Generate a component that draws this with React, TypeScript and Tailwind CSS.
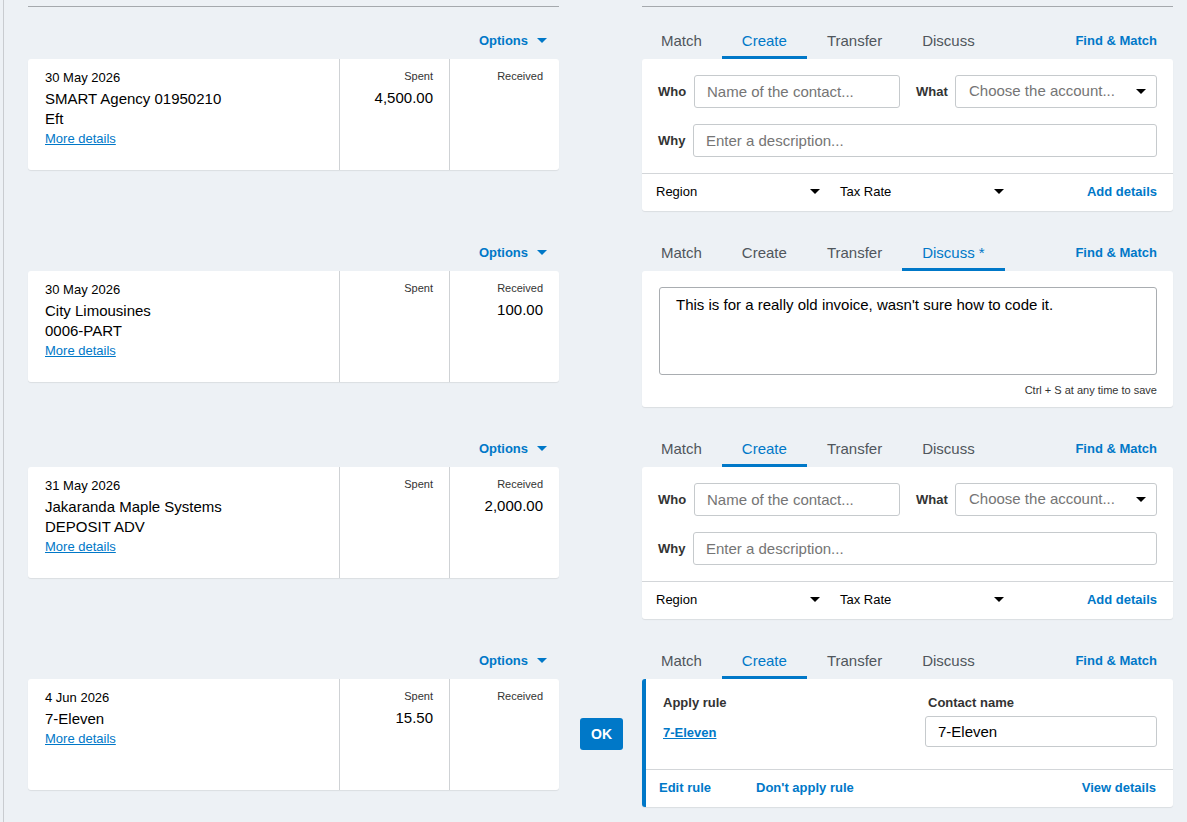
import React from "react";

type Txn = {
  date: string;
  name: string;
  ref?: string;
  spent?: string;
  received?: string;
};

const Caret = ({ className = "" }: { className?: string }) => (
  <svg width="10" height="5" viewBox="0 0 10 5" className={className}>
    <path d="M0 0h10L5 5z" fill="currentColor" />
  </svg>
);

function TxnCard({ t }: { t: Txn }) {
  return (
    <div className="flex h-[111px] w-[531px] rounded-[3px] bg-white shadow-[0_1px_1px_rgba(0,0,0,0.08)]">
      <div className="flex-1 pl-[17px] pt-[9px]">
        <div className="text-[13px] leading-[20px] text-black">{t.date}</div>
        <div className="text-[15px] leading-[21px] text-black">{t.name}</div>
        {t.ref && <div className="text-[15px] leading-[20px] text-black">{t.ref}</div>}
        <a className="block text-[13px] leading-[19px] text-[#0078c8] underline">More details</a>
      </div>
      <div className="w-[110px] border-l border-[#cfd2d5] pr-[16px] pt-[9px] text-right">
        <div className="text-[11px] leading-[16px] text-[#333]">Spent</div>
        {t.spent && <div className="mt-[4px] text-[15px] leading-[20px] text-black">{t.spent}</div>}
      </div>
      <div className="w-[110px] border-l border-[#cfd2d5] pr-[16px] pt-[9px] text-right">
        <div className="text-[11px] leading-[16px] text-[#333]">Received</div>
        {t.received && (
          <div className="mt-[4px] text-[15px] leading-[20px] text-black">{t.received}</div>
        )}
      </div>
    </div>
  );
}

function Tabs({ active }: { active: string }) {
  const tabs = ["Match", "Create", "Transfer", active === "Discuss *" ? "Discuss *" : "Discuss"];
  return (
    <div className="-ml-[1px] flex h-[31px] w-[532px]">
      {tabs.map((tab) => (
        <div
          key={tab}
          className={
            "flex items-center border-b-[3px] px-[20px] pb-[2px] text-[15px] " +
            (tab === active ? "border-[#0078c8] text-[#0078c8]" : "border-transparent text-[#50565c]")
          }
        >
          {tab}
        </div>
      ))}
      <div className="ml-auto flex items-center pb-[6px] pr-[16px] text-[13px] font-bold text-[#0078c8]">
        Find &amp; Match
      </div>
    </div>
  );
}

function CreatePanel() {
  return (
    <div className="w-[531px] rounded-[3px] bg-white shadow-[0_1px_1px_rgba(0,0,0,0.08)]">
      <div className="px-[16px] pt-[16px]">
        <div className="flex h-[33px] items-center">
          <div className="w-[36px] text-[13px] font-bold text-[#333]">Who</div>
          <input
            className="h-[33px] w-[206px] rounded-[3px] border border-[#c6cacd] px-[12px] text-[15px] outline-none placeholder:text-[#757575]"
            placeholder="Name of the contact..."
          />
          <div className="ml-[16px] w-[39px] text-[13px] font-bold text-[#333]">What</div>
          <div className="flex h-[33px] flex-1 items-center justify-between rounded-[3px] border border-[#c6cacd] pl-[13px] pr-[10px] text-[15px] text-[#757575]">
            <span>Choose the account...</span>
            <Caret className="text-black" />
          </div>
        </div>
        <div className="mt-[16px] flex h-[33px] items-center">
          <div className="w-[35px] text-[13px] font-bold text-[#333]">Why</div>
          <input
            className="h-[33px] flex-1 rounded-[3px] border border-[#c6cacd] px-[12px] text-[15px] outline-none placeholder:text-[#757575]"
            placeholder="Enter a description..."
          />
        </div>
      </div>
      <div className="mt-[16px] flex h-[38px] items-center border-t border-[#d3d6d9] pb-[2px] pl-[14px] pr-[16px] text-[13px] text-black">
        <div className="flex w-[168px] items-center justify-between pr-[4px]">
          <span>Region</span>
          <Caret />
        </div>
        <div className="ml-[16px] flex w-[168px] items-center justify-between pr-[4px]">
          <span>Tax Rate</span>
          <Caret />
        </div>
        <div className="ml-auto font-bold text-[#0078c8]">Add details</div>
      </div>
    </div>
  );
}

function DiscussPanel() {
  return (
    <div className="w-[531px] rounded-[3px] bg-white px-[16px] pb-[10px] pt-[16px] shadow-[0_1px_1px_rgba(0,0,0,0.08)]">
      <div className="ml-[1px] h-[88px] rounded-[3px] border border-[#a9adb1] px-[16px] pt-[7px] text-[15px] leading-[20px] text-black">
        This is for a really old invoice, wasn't sure how to code it.
      </div>
      <div className="mt-[9px] text-right text-[11px] leading-[13px] text-[#333]">
        Ctrl + S at any time to save
      </div>
    </div>
  );
}

function RulePanel() {
  return (
    <div className="w-[531px] rounded-[3px] border-l-4 border-[#0078c8] bg-white shadow-[0_1px_1px_rgba(0,0,0,0.08)]">
      <div className="flex h-[90px] pl-[17px] pr-[16px] pt-[16px]">
        <div className="flex-1">
          <div className="text-[13px] font-bold leading-[16px] text-[#333]">Apply rule</div>
          <a className="mt-[14px] block text-[13px] font-bold leading-[16px] text-[#0078c8] underline">
            7-Eleven
          </a>
        </div>
        <div className="w-[232px]">
          <div className="pl-[3px] text-[13px] font-bold leading-[16px] text-[#333]">Contact name</div>
          <input
            className="mt-[5px] h-[31px] w-full rounded-[3px] border border-[#c6cacd] px-[12px] text-[15px] text-black outline-none"
            defaultValue="7-Eleven"
          />
        </div>
      </div>
      <div className="flex h-[38px] items-center border-t border-[#d3d6d9] pb-[2px] pl-[13px] pr-[17px] text-[13px] font-bold text-[#0078c8]">
        <span>Edit rule</span>
        <span className="ml-[45px]">Don't apply rule</span>
        <span className="ml-auto">View details</span>
      </div>
    </div>
  );
}

function Row({
  t,
  panel,
  tab,
  ok,
}: {
  t: Txn;
  panel: React.ReactNode;
  tab: string;
  ok?: boolean;
}) {
  return (
    <div className="mb-[29px]">
      <div className="flex">
        <div className="flex h-[31px] w-[531px] items-center justify-end pb-[6px] pr-[12px] text-[13px] font-bold text-[#0078c8]">
          <span>Options</span>
          <Caret className="ml-[9px]" />
        </div>
        <div className="w-[83px]" />
        <Tabs active={tab} />
      </div>
      <div className="flex items-start">
        <TxnCard t={t} />
        <div className="flex w-[83px] justify-center pl-[2px] pt-[39px]">
          {ok && (
            <button className="h-[32px] w-[43px] rounded-[3px] bg-[#0078c8] text-[14px] font-bold text-white">
              OK
            </button>
          )}
        </div>
        {panel}
      </div>
    </div>
  );
}

export default function App() {
  return (
    <div className="min-h-screen bg-[#edf1f5] font-['Liberation_Sans',Arial,sans-serif]">
      <div className="ml-[3px] min-h-[822px] border-l border-[#c9ccd0] pl-[24px] pt-[6px]">
        <div className="mb-[21px] flex">
          <div className="w-[531px] border-t border-[#a5a9ad]" />
          <div className="w-[83px]" />
          <div className="w-[531px] border-t border-[#a5a9ad]" />
        </div>
        <Row
          t={{ date: "30 May 2026", name: "SMART Agency 01950210", ref: "Eft", spent: "4,500.00" }}
          tab="Create"
          panel={<CreatePanel />}
        />
        <Row
          t={{ date: "30 May 2026", name: "City Limousines", ref: "0006-PART", received: "100.00" }}
          tab="Discuss *"
          panel={<DiscussPanel />}
        />
        <Row
          t={{ date: "31 May 2026", name: "Jakaranda Maple Systems", ref: "DEPOSIT ADV", received: "2,000.00" }}
          tab="Create"
          panel={<CreatePanel />}
        />
        <Row
          t={{ date: "4 Jun 2026", name: "7-Eleven", spent: "15.50" }}
          tab="Create"
          panel={<RulePanel />}
          ok
        />
      </div>
    </div>
  );
}
